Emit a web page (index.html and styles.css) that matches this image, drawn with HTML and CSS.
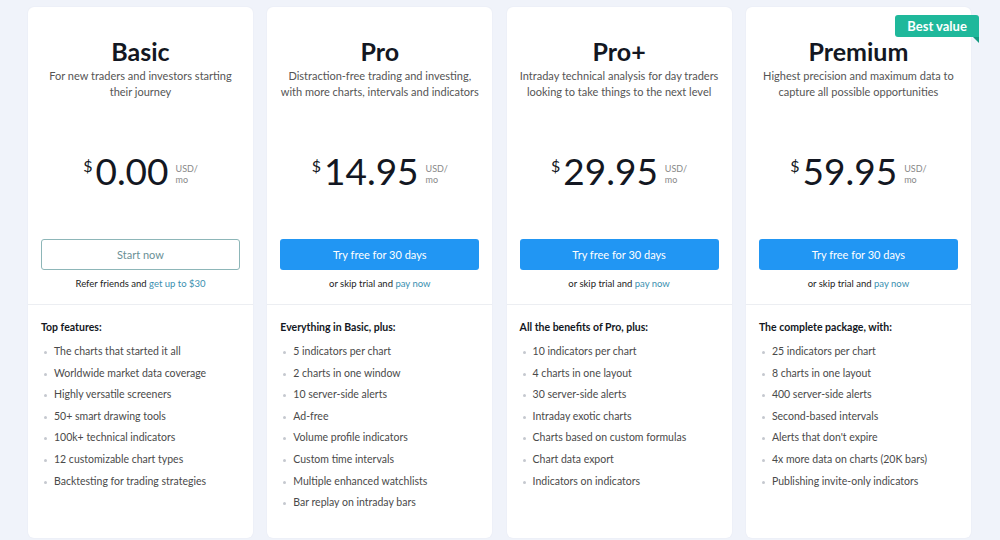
FILE: index.html
```html
<!DOCTYPE html>
<html lang="en">
<head>
<meta charset="utf-8">
<title>Pricing</title>
<link rel="stylesheet" href="styles.css">
</head>
<body>
<div class="plans">
  <div class="card">
    <div class="head">
      <h2 class="name">Basic</h2>
      <p class="desc">For new traders and investors starting their journey</p>
      <div class="price"><span class="cur">$</span><span class="amt">0.00</span><span class="per">USD/<br>mo</span></div>
      <a class="btn btn-outline">Start now</a>
      <p class="note">Refer friends and <a class="link">get up to $30</a></p>
    </div>
    <div class="feats">
      <h3 class="feats-title">Top features:</h3>
      <ul class="list">
        <li>The charts that started it all</li>
        <li>Worldwide market data coverage</li>
        <li>Highly versatile screeners</li>
        <li>50+ smart drawing tools</li>
        <li>100k+ technical indicators</li>
        <li>12 customizable chart types</li>
        <li>Backtesting for trading strategies</li>
      </ul>
    </div>
  </div>
  <div class="card">
    <div class="head">
      <h2 class="name">Pro</h2>
      <p class="desc">Distraction-free trading and investing, with more charts, intervals and indicators</p>
      <div class="price"><span class="cur">$</span><span class="amt">14.95</span><span class="per">USD/<br>mo</span></div>
      <a class="btn btn-blue">Try free for 30 days</a>
      <p class="note">or skip trial and <a class="link">pay now</a></p>
    </div>
    <div class="feats">
      <h3 class="feats-title">Everything in Basic, plus:</h3>
      <ul class="list">
        <li>5 indicators per chart</li>
        <li>2 charts in one window</li>
        <li>10 server-side alerts</li>
        <li>Ad-free</li>
        <li>Volume profile indicators</li>
        <li>Custom time intervals</li>
        <li>Multiple enhanced watchlists</li>
        <li>Bar replay on intraday bars</li>
      </ul>
    </div>
  </div>
  <div class="card">
    <div class="head">
      <h2 class="name">Pro+</h2>
      <p class="desc">Intraday technical analysis for day traders looking to take things to the next level</p>
      <div class="price"><span class="cur">$</span><span class="amt">29.95</span><span class="per">USD/<br>mo</span></div>
      <a class="btn btn-blue">Try free for 30 days</a>
      <p class="note">or skip trial and <a class="link">pay now</a></p>
    </div>
    <div class="feats">
      <h3 class="feats-title">All the benefits of Pro, plus:</h3>
      <ul class="list">
        <li>10 indicators per chart</li>
        <li>4 charts in one layout</li>
        <li>30 server-side alerts</li>
        <li>Intraday exotic charts</li>
        <li>Charts based on custom formulas</li>
        <li>Chart data export</li>
        <li>Indicators on indicators</li>
      </ul>
    </div>
  </div>
  <div class="card card-best">
    <div class="badge">Best value</div>
    <div class="head">
      <h2 class="name">Premium</h2>
      <p class="desc">Highest precision and maximum data to capture all possible opportunities</p>
      <div class="price"><span class="cur">$</span><span class="amt">59.95</span><span class="per">USD/<br>mo</span></div>
      <a class="btn btn-blue">Try free for 30 days</a>
      <p class="note">or skip trial and <a class="link">pay now</a></p>
    </div>
    <div class="feats">
      <h3 class="feats-title">The complete package, with:</h3>
      <ul class="list">
        <li>25 indicators per chart</li>
        <li>8 charts in one layout</li>
        <li>400 server-side alerts</li>
        <li>Second-based intervals</li>
        <li>Alerts that don't expire</li>
        <li>4x more data on charts (20K bars)</li>
        <li>Publishing invite-only indicators</li>
      </ul>
    </div>
  </div>
</div>
</body>
</html>
```

FILE: styles.css
```css
* { box-sizing: border-box; }
html, body { margin: 0; padding: 0; }
body {
  width: 1000px;
  height: 540px;
  overflow: hidden;
  background: #f0f3fa;
  font-family: "Lato", "DejaVu Sans", sans-serif;
  color: #131722;
}
.plans {
  display: grid;
  grid-template-columns: repeat(4, 225px);
  column-gap: 14.3px;
  padding: 7px 30px 0 28px;
}
.card {
  position: relative;
  height: 531px;
  background: #fff;
  border-radius: 6px;
  box-shadow: 0 0 2px rgba(30, 40, 80, 0.06);
  display: flex;
  flex-direction: column;
}
.head {
  padding: 29px 13px 13px;
  border-bottom: 1px solid #eceef2;
  display: flex;
  flex-direction: column;
  align-items: center;
  text-align: center;
}
.name {
  margin: 0;
  font-size: 25px;
  line-height: 30px;
  font-weight: 700;
  color: #131722;
}
.desc {
  margin: 2px 0 0;
  font-size: 11px;
  line-height: 15.5px;
  color: #555;
  height: 31px;
}
.price {
  margin-top: 52px;
  display: flex;
  align-items: flex-start;
  height: 40px;
}
.cur {
  font-size: 16px;
  line-height: 20px;
  margin-top: 5px;
  margin-right: 3px;
}
.amt {
  font-size: 37px;
  line-height: 40px;
  font-weight: 400;
}
.per {
  font-size: 9px;
  line-height: 11px;
  color: #888;
  text-align: left;
  margin-left: 7px;
  margin-top: 12px;
}
.btn {
  margin-top: 48px;
  width: 199px;
  height: 31px;
  border-radius: 3px;
  display: flex;
  align-items: center;
  justify-content: center;
  font-size: 11px;
}
.btn-outline {
  border: 1px solid #8db6b8;
  color: #6a9096;
  background: #fff;
}
.btn-blue {
  background: #2196f3;
  color: #fff;
}
.note {
  margin: 7px 0 0;
  font-size: 9.5px;
  line-height: 14px;
  color: #222;
}
.link { color: #3a8fb0; }
.feats {
  padding: 15px 13px 0;
}
.feats-title {
  margin: 0 0 7px;
  font-size: 10.5px;
  line-height: 14px;
  font-weight: 700;
  color: #131722;
}
.list {
  list-style: none;
  margin: 0;
  padding: 0;
}
.list li {
  position: relative;
  padding-left: 13px;
  font-size: 10.5px;
  line-height: 21.6px;
  color: #4a4a4a;
}
.list li::before {
  content: "";
  position: absolute;
  left: 3px;
  top: 10px;
  width: 3px;
  height: 3px;
  border-radius: 50%;
  background: #c5c8cf;
}
.badge {
  position: absolute;
  top: 8px;
  right: -8px;
  background: #1fb89b;
  color: #fff;
  font-weight: 700;
  font-size: 13px;
  line-height: 22px;
  padding: 0 12px;
  border-radius: 3px 3px 0 3px;
}
.badge::after {
  content: "";
  position: absolute;
  right: 0;
  bottom: -6px;
  border-top: 6px solid #139a80;
  border-left: 6px solid transparent;
}
```
